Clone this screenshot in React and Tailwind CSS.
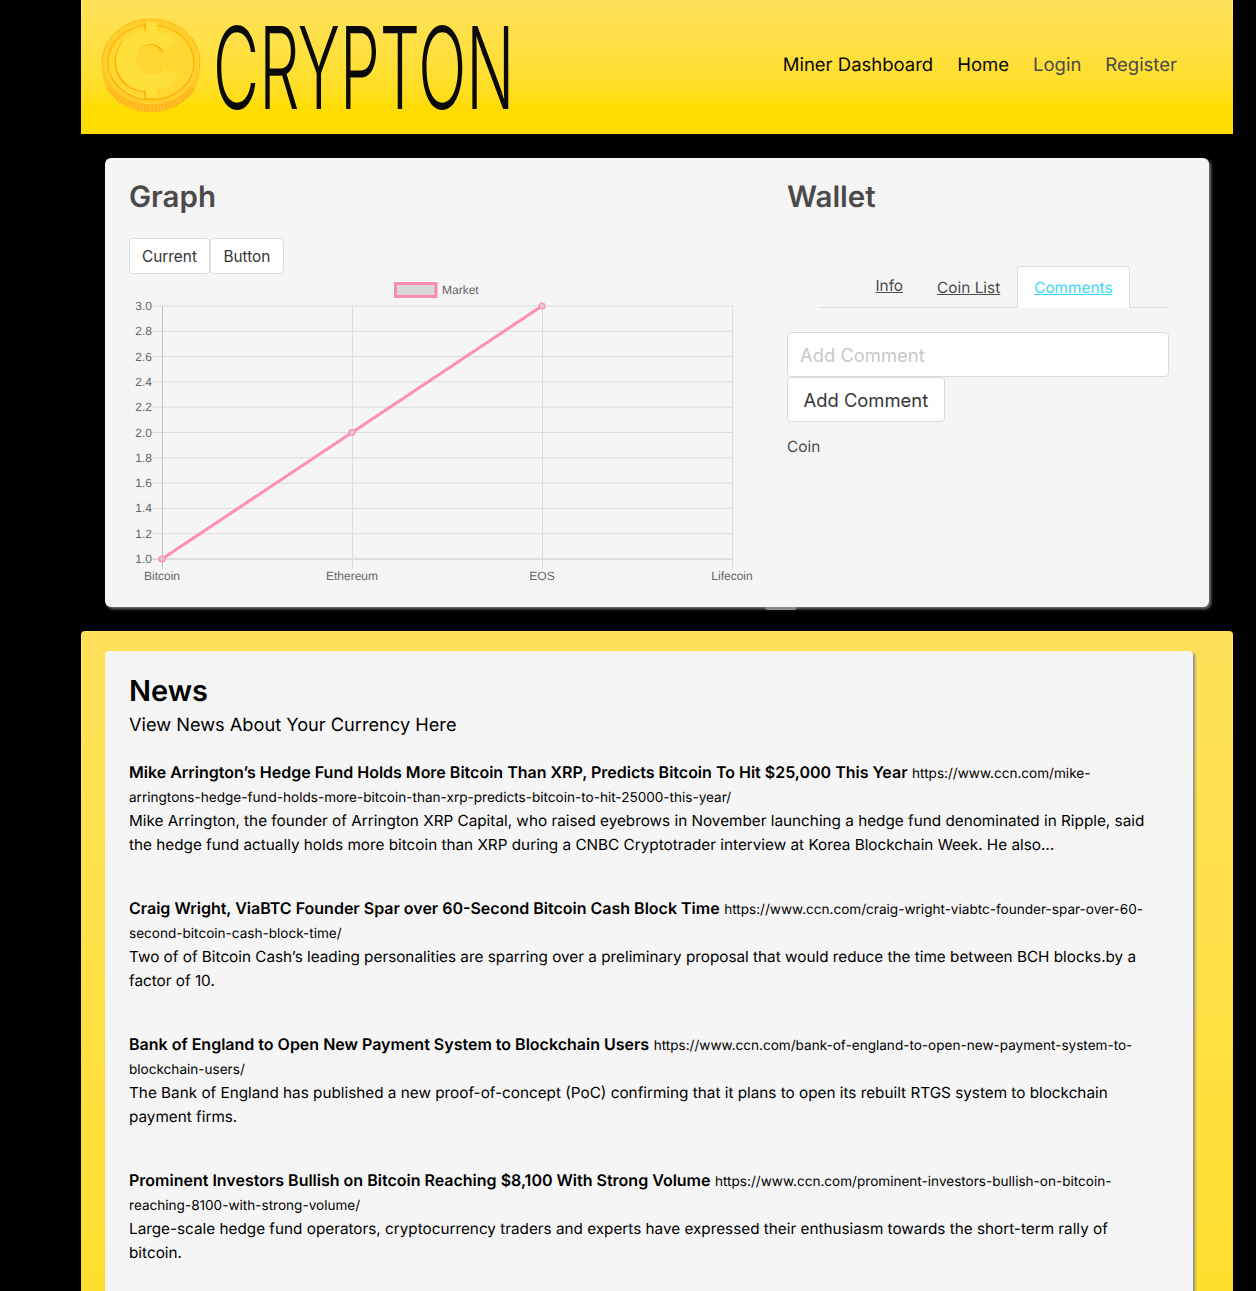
const ys = [
  ["3.0", 306], ["2.8", 331.3], ["2.6", 356.6], ["2.4", 381.9], ["2.2", 407.2], ["2.0", 432.5],
  ["1.8", 457.8], ["1.6", 483.1], ["1.4", 508.4], ["1.2", 533.7], ["1.0", 559],
];
const xs = [["Bitcoin", 162], ["Ethereum", 352], ["EOS", 542], ["Lifecoin", 732]];
const OX = 129, OY = 280;

function Chart() {
  return (
    <svg width="640" height="310" viewBox={`${OX} ${OY} 640 310`} className="block" style={{ fontFamily: "'Liberation Sans', sans-serif" }}>
      <rect x="395.5" y="283.5" width="40.5" height="13" fill="#d9d9d9" stroke="#fb8cab" strokeWidth="3" />
      <text x="442" y="294" fontSize="12" fill="#666">Market</text>
      {ys.map(([l, y], i) => (
        <g key={l}>
          <line x1="152" x2="733" y1={y} y2={y} stroke={i === ys.length - 1 ? "#c4c4c4" : "#dcdcdc"} />
          <text x="152" y={y + 4} fontSize="12" fill="#666" textAnchor="end">{l}</text>
        </g>
      ))}
      {xs.map(([l, x], i) => (
        <g key={l}>
          <line x1={x + 0.5} x2={x + 0.5} y1="306" y2="569" stroke={i === 0 ? "#c4c4c4" : "#dcdcdc"} />
          <text x={x} y="580" fontSize="12" fill="#666" textAnchor="middle">{l}</text>
        </g>
      ))}
      <polyline points="162,559 352,432.5 542,306" fill="none" stroke="#ff8fb0" strokeWidth="3" />
      {[[162, 559], [352, 432.5], [542, 306]].map(([x, y]) => (
        <circle key={x} cx={x} cy={y} r="3" fill="#e6c3cd" stroke="#ff8fb0" strokeWidth="1.2" />
      ))}
    </svg>
  );
}

const cPath = "M45 5H56V14A31 31 0 0 1 76 25L63 35A15 15.5 0 1 0 63 50L77 59A31 31 0 0 1 56 74V81H45V74A30 30 0 0 1 45 14Z";

function Coin() {
  return (
    <svg width="100" height="96" viewBox="0 0 100 96" className="block shrink-0">
      <ellipse cx="50" cy="51" rx="49" ry="44.5" fill="#ffc42a" />
      <path d="M8 70A49 44 0 0 0 92 70" fill="none" stroke="#ffb21a" strokeWidth="7" strokeDasharray="2 1.5" />
      <ellipse cx="50" cy="44" rx="50" ry="44" fill="#ffe14d" />
      <ellipse cx="50" cy="45" rx="49" ry="43" fill="#ffcf2c" stroke="#ffb81a" strokeWidth="1" />
      <ellipse cx="50" cy="45.5" rx="43" ry="37.5" fill="#ffd632" stroke="#ffb000" strokeWidth="1.2" />
      <path d={cPath} fill="#ffb000" transform="translate(-1.5 1)" />
      <path d={cPath} fill="#ffe03a" />
    </svg>
  );
}

function Article({ title, url, body }) {
  return (
    <div className="mb-[39px] pr-[12px] text-black">
      <div className="text-[16px] leading-[24px]">
        <span className="font-semibold">{title}</span> <span className="text-[13.57px] leading-[16px]">{url}</span>
      </div>
      <p className="pt-[1px] text-[15.29px] leading-[24px]">{body}</p>
    </div>
  );
}

const tabClass = "text-[15.36px] text-[#4a4a4a] underline";
const btn = "h-[36px] rounded-[4px] border border-[#dbdbdb] bg-white pt-[1px] text-[15.36px] text-[#363636]";

export default function App() {
  return (
    <div className="h-[1291px] overflow-hidden bg-black font-['Inter',sans-serif] text-[15.36px] leading-[24px] [text-rendering:geometricPrecision]">
      <div className="ml-[81px] w-[1152px]">
        <header className="flex h-[134px] items-center justify-between bg-gradient-to-b from-[#ffe25a] to-[#ffdd00] to-80% pl-[20px] pr-[56px]">
          <div className="flex items-center">
            <div className="-mt-[4px]"><Coin /></div>
            <div className="relative ml-[16px] h-[96px] w-[294px]">
              <span className="absolute left-[-4px] top-[-10px] origin-left scale-x-[0.556] whitespace-nowrap text-[114px] font-[350] leading-[120px] text-[#0a0a0a]">CRYPTON</span>
            </div>
          </div>
          <nav className="-mt-[4px] flex items-center gap-[24px] text-[18.5px]">
            <span className="text-[#0a0a0a]">Miner Dashboard</span>
            <span className="text-[#0a0a0a]">Home</span>
            <span className="text-[#4a4a4a]">Login</span>
            <span className="text-[#4a4a4a]">Register</span>
          </nav>
        </header>

        <section className="p-[24px]">
          <div className="relative flex h-[449px] rounded-[6px] bg-[#f5f5f5] p-[24px] shadow-[2px_2px_3px_#777]">
            <div className="absolute left-[660px] top-[449px] h-[3px] w-[32px] rounded-b-[3px] bg-[#8a8a8a]" />
            <div className="w-[658px] shrink-0">
              <h2 className="-mt-[1px] text-[29.5px] font-semibold leading-[32px] text-[#4a4a4a]">Graph</h2>
              <div className="mt-[25px] flex">
                <button className={`${btn} px-[12px]`}>Current</button>
                <button className={`${btn} px-[12.5px]`}>Button</button>
              </div>
              <div className="mt-[6px]"><Chart /></div>
            </div>
            <div className="w-[382px] shrink-0">
              <h2 className="-mt-[1px] text-[29.5px] font-semibold leading-[32px] text-[#4a4a4a]">Wallet</h2>
              <div className="ml-[32px] mt-[52px] flex h-[43px] items-end justify-center border-b border-[#dbdbdb]">
                <a className={`${tabClass} mx-[17px] mb-[9px]`}>Info</a>
                <a className={`${tabClass} mx-[17px] mb-[7px]`}>Coin List</a>
                <a className="-mb-px rounded-t-[4px] border border-[#dbdbdb] border-b-white bg-white px-[16px] pb-[7px] pt-[9px] text-[15.36px] text-[#3ad7f5] underline">Comments</a>
              </div>
              <input placeholder="Add Comment" className="mt-[24px] block h-[45px] w-full rounded-[4px] border border-[#dbdbdb] bg-white px-[12px] text-[18.4px] text-[#363636] placeholder:text-[#c8c8c8]" />
              <button className="block h-[45px] rounded-[4px] border border-[#dbdbdb] bg-white px-[15.5px] text-[18.4px] text-[#363636]">Add Comment</button>
              <p className="mt-[13px] text-[#4a4a4a]">Coin</p>
            </div>
          </div>
        </section>

        <section className="h-[900px] rounded-t-[4px] bg-gradient-to-b from-[#ffe25a] to-[#ffdd00] pl-[24px] pr-[40px] pt-[20px]">
          <div className="h-[880px] rounded-[4px] bg-[#f5f5f5] px-[24px] pt-[22px] shadow-[2px_2px_3px_#888]">
            <h1 className="text-[29px] font-semibold leading-[36px] text-black">News</h1>
            <h2 className="mb-[19px] text-[18.2px] leading-[32px] text-black">View News About Your Currency Here</h2>
            <Article
              title="Mike Arrington’s Hedge Fund Holds More Bitcoin Than XRP, Predicts Bitcoin To Hit $25,000 This Year"
              url="https://www.ccn.com/mike-arringtons-hedge-fund-holds-more-bitcoin-than-xrp-predicts-bitcoin-to-hit-25000-this-year/"
              body="Mike Arrington, the founder of Arrington XRP Capital, who raised eyebrows in November launching a hedge fund denominated in Ripple, said the hedge fund actually holds more bitcoin than XRP during a CNBC Cryptotrader interview at Korea Blockchain Week. He also…"
            />
            <Article
              title="Craig Wright, ViaBTC Founder Spar over 60-Second Bitcoin Cash Block Time"
              url="https://www.ccn.com/craig-wright-viabtc-founder-spar-over-60-second-bitcoin-cash-block-time/"
              body="Two of of Bitcoin Cash’s leading personalities are sparring over a preliminary proposal that would reduce the time between BCH blocks.by a factor of 10."
            />
            <Article
              title="Bank of England to Open New Payment System to Blockchain Users"
              url="https://www.ccn.com/bank-of-england-to-open-new-payment-system-to-blockchain-users/"
              body="The Bank of England has published a new proof-of-concept (PoC) confirming that it plans to open its rebuilt RTGS system to blockchain payment firms."
            />
            <Article
              title="Prominent Investors Bullish on Bitcoin Reaching $8,100 With Strong Volume"
              url="https://www.ccn.com/prominent-investors-bullish-on-bitcoin-reaching-8100-with-strong-volume/"
              body="Large-scale hedge fund operators, cryptocurrency traders and experts have expressed their enthusiasm towards the short-term rally of bitcoin."
            />
          </div>
        </section>
      </div>
    </div>
  );
}
